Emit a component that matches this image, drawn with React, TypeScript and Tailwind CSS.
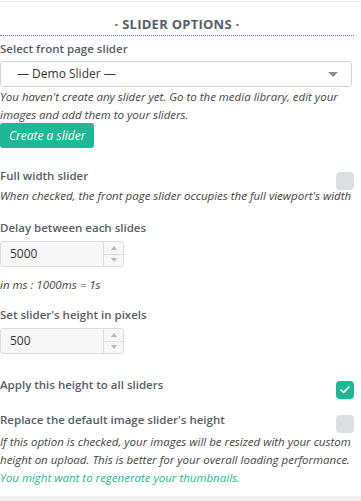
import { Check } from 'lucide-react'

function Spinner() {
  return (
    <div className="flex w-[20px] flex-col border-l border-[#dcdcdc]">
      <div className="flex flex-1 items-center justify-center border-b border-[#dcdcdc]">
        <span className="h-0 w-0 border-x-[3px] border-b-[4px] border-x-transparent border-b-[#b5b5b5]" />
      </div>
      <div className="flex flex-1 items-center justify-center">
        <span className="h-0 w-0 border-x-[3px] border-t-[4px] border-x-transparent border-t-[#b5b5b5]" />
      </div>
    </div>
  )
}

function NumberInput({ value }: { value: string }) {
  return (
    <div className="flex h-[26px] w-[124px] rounded-[3px] border border-[#dcdcdc] bg-[#f7f7f7]">
      <div className="flex flex-1 items-center pl-[9px] text-[12px] text-[#333]">{value}</div>
      <Spinner />
    </div>
  )
}

function Box({ checked = false }: { checked?: boolean }) {
  return (
    <div
      className={
        checked
          ? 'flex h-[18px] w-[18px] shrink-0 items-center justify-center rounded-[4px] bg-[#1fb894]'
          : 'h-[18px] w-[18px] shrink-0 rounded-[4px] bg-[#dcdfe2]'
      }
    >
      {checked && <Check size={12} strokeWidth={3.5} className="text-white" />}
    </div>
  )
}

export default function App() {
  return (
    <div className="relative h-[501px] w-[361px] overflow-hidden bg-white font-['Open_Sans',sans-serif] text-[11.5px] text-[#555d66]">
      <div className="h-[2px] w-full border-b border-[#e6e6e6]" />
      <div className="w-[354px]">
        <div className="border-b border-dotted border-[#1fb894] pt-[13px] pb-[2px] text-center text-[13px] leading-[18px] font-bold tracking-[0.02em] text-[#555d66]">
          · SLIDER OPTIONS ·
        </div>

        <div className="mt-[4px] font-semibold leading-[18px]">Select front page slider</div>
        <div className="mt-[3px] flex h-[26px] w-[352px] items-center justify-between rounded-[3px] border border-[#d4d4d4] pr-[13px] pl-[16px] text-[12px] text-[#333]">
          <span>— Demo Slider —</span>
          <span className="h-0 w-0 border-x-[5px] border-t-[5px] border-x-transparent border-t-[#8c8c8c]" />
        </div>
        <p className="mt-[1px] leading-[18px] text-[#444] italic">
          You haven't create any slider yet. Go to the media library, edit your images and add them to your sliders.
        </p>
        <button className="mt-[-1px] h-[25px] rounded-[3px] bg-[#1fb894] px-[9px] text-[12px] text-white italic">
          Create a slider
        </button>

        <div className="mt-[19px] flex h-[18px] items-start justify-between">
          <div className="font-semibold leading-[18px]">Full width slider</div>
          <div className="pt-[5px]">
            <Box />
          </div>
        </div>
        <p className="mt-[2px] leading-[18px] whitespace-nowrap text-[#444] italic">
          When checked, the front page slider occupies the full viewport's width
        </p>

        <div className="mt-[14px] font-semibold leading-[18px]">Delay between each slides</div>
        <div className="mt-[4px]">
          <NumberInput value="5000" />
        </div>
        <p className="mt-[9px] leading-[18px] text-[#444] italic">in ms : 1000ms = 1s</p>

        <div className="mt-[12px] font-semibold leading-[18px]">Set slider's height in pixels</div>
        <div className="mt-[4px]">
          <NumberInput value="500" />
        </div>

        <div className="mt-[22px] flex h-[18px] items-start justify-between">
          <div className="font-semibold leading-[18px]">Apply this height to all sliders</div>
          <div className="pt-[5px]">
            <Box checked />
          </div>
        </div>

        <div className="mt-[17px] flex h-[18px] items-start justify-between">
          <div className="font-semibold leading-[18px]">Replace the default image slider's height</div>
          <div className="pt-[4px]">
            <Box />
          </div>
        </div>
        <p className="mt-[4px] leading-[18px] text-[#444] italic">
          If this option is checked, your images will be resized with your custom height on upload. This is better for your overall loading performance.
          <span className="block text-[#1fb894]">You might want to regenerate your thumbnails.</span>
        </p>
      </div>
      <div className="absolute bottom-0 left-0 h-[5px] w-full bg-[#f0f0f0]" />
    </div>
  )
}
